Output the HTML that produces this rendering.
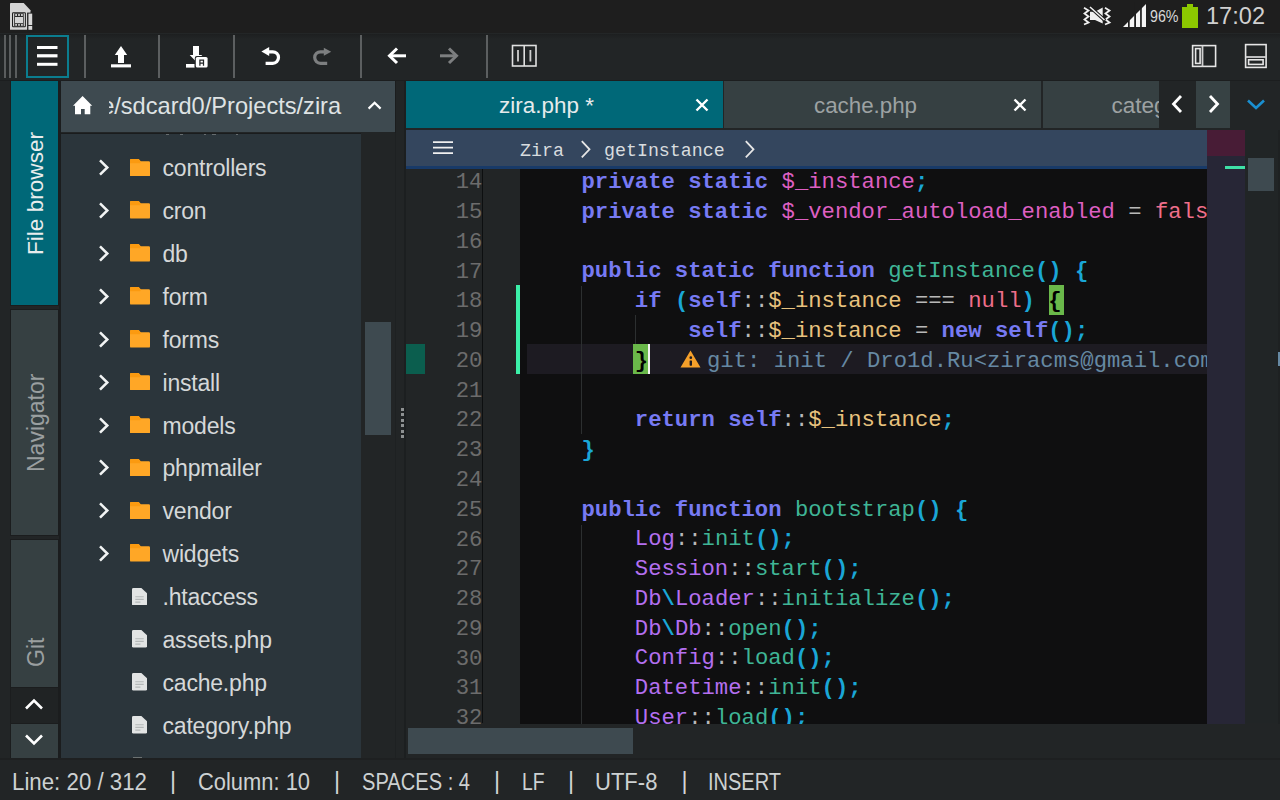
<!DOCTYPE html>
<html><head><meta charset="utf-8">
<style>
*{margin:0;padding:0;box-sizing:border-box}
html,body{width:1280px;height:800px;overflow:hidden;background:#222526;font-family:"Liberation Sans",sans-serif}
.a{position:absolute}
.tx{position:absolute;white-space:nowrap;line-height:1;font-family:"Liberation Sans",sans-serif}
#sbar{left:0;top:0;width:1280px;height:34px;background:#1e1e1e;border-bottom:1px solid #232627}
#tbar{left:0;top:34px;width:1280px;height:47px;background:linear-gradient(#1d1f20,#222526 5px);border-bottom:1px solid #1c1e1f}
.sep{position:absolute;top:35px;width:2px;height:43px;background:#5c5f60}
.grip{position:absolute;top:35px;width:2px;height:43px;background:#5a5d5e}
.ltab{position:absolute;left:11px;width:47px;overflow:hidden;box-shadow:0 0 0 1px #1b1d1e}
.vt{position:absolute;white-space:nowrap;font-size:23px;line-height:1;transform-origin:0 0;transform:rotate(-90deg)}
#phead{left:61px;top:81px;width:334px;height:51px;background:#3e4a50}
#flist{left:61px;top:133px;width:300px;height:625px;background:#2b353b;overflow:hidden}
.tab{position:absolute;top:0;height:47px;overflow:hidden}
#crumb{left:406px;top:130px;width:801px;height:36px;background:#34465e}
#crumbb{left:406px;top:166px;width:801px;height:3px;background:#183a68}
#gutter{left:406px;top:169px;width:114px;height:555px;background:#222526;overflow:hidden}
#code{left:520px;top:169px;width:687px;height:555px;background:#0f0f10;overflow:hidden}
.cl{position:absolute;left:8.2px;white-space:pre;font-family:"Liberation Mono",monospace;font-size:22.22px;line-height:1;color:#d0d0d0}
.k{color:#777af3;font-weight:bold}
.v{color:#de5fc2}
.f{color:#ee6e8a}
.fn{color:#3fb596}
.p{color:#1aa6d6;font-weight:bold}
.o{color:#b8b8b8}
.s{color:#e8c27e}
.c{color:#b46ff0}
.hb{color:#000;font-weight:bold}
#mini{left:1207px;top:130px;width:38px;height:594px;background:#272636}
#vscr{left:1245px;top:130px;width:33px;height:593px;background:#212526}
#hscr{left:406px;top:724px;width:874px;height:35px;background:#222526}
#foot{left:0;top:758px;width:1280px;height:42px;background:#222526}
</style></head><body>
<div id="sbar" class="a"></div>
<!-- sd card icon -->
<svg class="a" style="left:0;top:0" width="40" height="34" viewBox="0 0 40 34">
  <path d="M10 3.8 Q10 3 10.8 3 H23.7 L30.5 10.2 V29.8 H10 Z" fill="#d4d4d4"/>
  <rect x="27.1" y="12.6" width="6" height="19" fill="#1e1e1e"/>
  <rect x="28.4" y="13.6" width="3.8" height="11.5" fill="#d8d8d8"/>
  <rect x="28.4" y="26" width="3.8" height="3.8" fill="#d8d8d8"/>
  <rect x="12" y="12.3" width="13.9" height="14.9" rx="1.2" fill="#1e1e1e"/>
  <rect x="13" y="13.3" width="11.9" height="12.9" fill="#d0d0d0"/>
  <rect x="14.2" y="13.3" width="9.5" height="12.9" fill="#2a2a2a"/>
  <rect x="15" y="17" width="8" height="6.2" fill="#d4d4d4"/>
  <rect x="15.2" y="14" width="1.8" height="2" fill="#c8c8c8"/><rect x="18.1" y="14" width="1.8" height="2" fill="#c8c8c8"/><rect x="21" y="14" width="1.8" height="2" fill="#c8c8c8"/>
  <rect x="15.2" y="24" width="1.8" height="1.8" fill="#c8c8c8"/><rect x="18.1" y="24" width="1.8" height="1.8" fill="#c8c8c8"/><rect x="21" y="24" width="1.8" height="1.8" fill="#c8c8c8"/>
</svg>
<!-- right status icons -->
<svg class="a" style="left:1078px;top:2px" width="72" height="28" viewBox="0 0 72 28">
  <path d="M6 5.8 L10.5 8.5 L6.5 11.5 L10.5 14.5 L6.5 17.5 L10.5 20.5 L6 22.5" fill="none" stroke="#f0f0f0" stroke-width="1.8"/>
  <path d="M27 5.8 L31.5 8.5 L27.5 11.5 L31.5 14.5 L27.5 17.5 L31.5 20.5 L27 22.5" fill="none" stroke="#f0f0f0" stroke-width="1.8"/>
  <path d="M12 9.8 H17 L24.7 5.6 V21.6 L17 18 H12 Z" fill="#f0f0f0"/>
  <path d="M11.5 4.5 L27 18.5" stroke="#1e1e1e" stroke-width="3.6"/>
  <path d="M12 5 L26.5 18" stroke="#f0f0f0" stroke-width="1.5"/>
  <path d="M45 25 L68 2 V25 Z" fill="#f4f4f4"/>
  <rect x="50" y="0" width="1.7" height="26" fill="#1e1e1e"/>
  <rect x="56.2" y="0" width="1.8" height="26" fill="#1e1e1e"/>
  <rect x="62.1" y="0" width="1.7" height="26" fill="#1e1e1e"/>
</svg>
<div class="tx" style="left:1149.5px;top:7.91px;font-size:17.0px;color:#d8d8d8;transform:scaleX(0.8376);transform-origin:0 0;">96%</div>
<svg class="a" style="left:1182px;top:4px" width="16" height="25" viewBox="0 0 16 25">
  <rect x="5" y="0" width="6" height="3.5" fill="#8cc800"/>
  <rect x="0" y="3" width="16" height="21" fill="#8cc800"/>
</svg>
<div class="tx" style="left:1205.5px;top:3.68px;font-size:24.0px;color:#d0d0d0;transform:scaleX(0.9825);transform-origin:0 0;">17:02</div>

<div id="tbar" class="a"></div>
<div class="grip" style="left:4px"></div>
<div class="grip" style="left:9px"></div>
<div class="grip" style="left:15px"></div>
<div class="a" style="left:26px;top:35px;width:43px;height:43px;border:2px solid #0b7d8f"></div>
<svg class="a" style="left:37px;top:46px" width="21" height="21" viewBox="0 0 21 21">
  <rect x="0" y="0" width="20.5" height="3" fill="#fff"/>
  <rect x="0" y="8.2" width="20.5" height="3.2" fill="#fff"/>
  <rect x="0" y="16.8" width="20.5" height="3" fill="#fff"/>
</svg>
<div class="sep" style="left:84px"></div>
<!-- upload -->
<svg class="a" style="left:110px;top:45px" width="22" height="24" viewBox="0 0 22 24">
  <path d="M11 1 L17.2 10 H14 V18 H8 V10 H4.8 Z" fill="#fff"/>
  <rect x="1" y="19.3" width="20" height="3.1" fill="#fff"/>
</svg>
<div class="sep" style="left:158px"></div>
<!-- save as -->
<svg class="a" style="left:185px;top:45px" width="24" height="24" viewBox="0 0 24 24">
  <path d="M8 1 H14 V10 H17.3 L11 16.5 L4.7 10 H8 Z" fill="#fff"/>
  <rect x="1" y="19" width="8.6" height="3.6" fill="#fff"/>
  <rect x="9.8" y="11" width="13.8" height="12.6" rx="2" fill="#222526"/>
  <rect x="10.8" y="12" width="11.8" height="10.6" rx="1.6" fill="#fff"/>
  <path d="M14.9 20.8 V15.2 H18.5 V20.8 M14.9 18 H18.5" fill="none" stroke="#222526" stroke-width="1.25"/>
</svg>
<div class="sep" style="left:233px"></div>
<!-- undo -->
<svg class="a" style="left:260px;top:46px" width="22" height="20" viewBox="0 0 22 20">
  <path d="M7 5.8 H12.75 A5.75 5.75 0 0 1 12.75 17.3 H5.6" fill="none" stroke="#fff" stroke-width="3.2"/>
  <path d="M1.4 5.6 L9.2 1.1 V10.1 Z" fill="#fff"/>
</svg>
<!-- redo -->
<svg class="a" style="left:312px;top:46px" width="22" height="20" viewBox="0 0 22 20">
  <path d="M13 5.8 H8.45 A5.75 5.75 0 0 0 8.45 17.3 H15.2" fill="none" stroke="#7d7f80" stroke-width="3.2"/>
  <path d="M19.2 5.8 L11.8 1.8 V9.8 Z" fill="#7d7f80"/>
</svg>
<div class="sep" style="left:360px"></div>
<!-- back -->
<svg class="a" style="left:386px;top:46px" width="22" height="20" viewBox="0 0 22 20">
  <path d="M20 9.8 H4" stroke="#fff" stroke-width="3"/>
  <path d="M11 2.5 L3.5 9.8 L11 17" fill="none" stroke="#fff" stroke-width="3"/>
</svg>
<!-- forward -->
<svg class="a" style="left:438px;top:46px" width="22" height="20" viewBox="0 0 22 20">
  <path d="M2 9.8 H18" stroke="#7d7f80" stroke-width="3"/>
  <path d="M11 2.5 L18.5 9.8 L11 17" fill="none" stroke="#7d7f80" stroke-width="3"/>
</svg>
<div class="sep" style="left:486px"></div>
<!-- split -->
<svg class="a" style="left:511px;top:44px" width="27" height="24" viewBox="0 0 27 24">
  <rect x="1.5" y="1.5" width="23.5" height="20.5" fill="none" stroke="#e0e0e0" stroke-width="1.6"/>
  <path d="M13.2 1.5 V22" stroke="#e0e0e0" stroke-width="1.6"/>
  <path d="M7 6 V17.5 M19.4 6 V17.5" stroke="#cfcfcf" stroke-width="1.8"/>
</svg>
<!-- right toolbar icons -->
<svg class="a" style="left:1191px;top:44px" width="27" height="24" viewBox="0 0 27 24">
  <rect x="1.6" y="1.6" width="23" height="20.8" fill="none" stroke="#e6e6e6" stroke-width="1.6"/>
  <path d="M11.5 1.6 V22.4" stroke="#d0d0d0" stroke-width="1.8"/>
  <rect x="4.6" y="4.6" width="4.5" height="14.8" fill="none" stroke="#e6e6e6" stroke-width="1.6"/>
</svg>
<svg class="a" style="left:1244px;top:43px" width="24" height="26" viewBox="0 0 24 26">
  <rect x="1.6" y="1.6" width="20.5" height="22.8" fill="none" stroke="#e6e6e6" stroke-width="1.6"/>
  <path d="M1.6 14 H22" stroke="#d0d0d0" stroke-width="1.8"/>
  <rect x="4.6" y="16.8" width="14.5" height="4.6" fill="none" stroke="#e6e6e6" stroke-width="1.6"/>
</svg>

<!-- left tabs -->
<div class="ltab" style="top:81px;height:224px;background:#006878"></div>
<div class="vt" style="left:24.5px;top:254.5px;color:#e8eced;font-size:22.6px">File browser</div>
<div class="ltab" style="top:310px;height:225px;background:#364042"></div>
<div class="vt" style="left:24.5px;top:471.5px;color:#9a9fa0">Navigator</div>
<div class="ltab" style="top:540px;height:147px;background:#364042"></div>
<div class="vt" style="left:24.5px;top:666.5px;color:#9a9fa0">Git</div>
<div class="ltab" style="top:688px;height:35px;background:#202324"></div>
<svg class="a" style="left:24px;top:697px" width="20" height="14" viewBox="0 0 20 14"><path d="M2 11.5 L10 3.5 L18 11.5" fill="none" stroke="#fff" stroke-width="2.6"/></svg>
<div class="ltab" style="top:724px;height:34px;background:#364042"></div>
<svg class="a" style="left:24px;top:733px" width="20" height="14" viewBox="0 0 20 14"><path d="M2 2.5 L10 10.5 L18 2.5" fill="none" stroke="#fff" stroke-width="2.6"/></svg>

<!-- file panel -->
<div class="a" style="left:58.5px;top:81px;width:2.5px;height:678px;background:#1b1d1e"></div>
<div id="phead" class="a" style="overflow:hidden">
  <svg class="a" style="left:12px;top:15px" width="20" height="19" viewBox="0 0 20 19"><path d="M9.6 0 L19.2 9.7 H17.3 V18.2 H11.7 V13 H8 V18.2 H2 V9.7 H0 Z" fill="#fff"/></svg>
  <div class="a" style="left:48px;top:0;width:250px;height:51px;overflow:hidden">
    <div class="tx" style="left:-80.0px;top:14.02px;font-size:23.6px;color:#dfe3e4;">/storage/sdcard0/Projects/zira</div>
  </div>
  <svg class="a" style="left:306px;top:19px" width="16" height="11" viewBox="0 0 16 11"><path d="M1.6 8.6 L7.6 2.8 L13.6 8.6" fill="none" stroke="#fff" stroke-width="2.2"/></svg>
</div>
<div id="flist" class="a">
<div class="a" style="left:0;top:0;width:300px;height:1px;background:#1a1c1d"></div>
<div class="a" style="left:105px;top:1px;width:3px;height:1px;background:#666d70"></div>
<div class="a" style="left:119px;top:1px;width:3px;height:1px;background:#666d70"></div>
<div class="a" style="left:143px;top:1px;width:2px;height:1px;background:#666d70"></div>
<div class="a" style="left:151px;top:1px;width:4px;height:1px;background:#666d70"></div>
<div class="a" style="left:175px;top:1px;width:2px;height:1px;background:#666d70"></div>
<div class="a" style="left:72px;top:624px;width:9px;height:1px;background:#6c7272"></div>
<svg class="a" style="left:37px;top:26.3px" width="12" height="17" viewBox="0 0 12 17"><path d="M2 1.3 L9.3 8.5 L2 15.7" fill="none" stroke="#f2f4f4" stroke-width="2.5"/></svg>
<svg class="a" style="left:69px;top:25.5px" width="20" height="17.6" viewBox="0 0 20 17.6"><path d="M0 1.2 Q0 0 1.2 0 H8.6 L10.6 2.2 H18.8 Q20 2.2 20 3.4 V16.4 Q20 17.6 18.8 17.6 H1.2 Q0 17.6 0 16.4 Z" fill="#ffa726"/><path d="M0 1.2 Q0 0 1.2 0 H8.6 L10.6 2.2 V3.6 Q10.6 4.2 10 4.2 H0 Z" fill="#fb9a10"/></svg>
<div class="tx" style="left:101.5px;top:24.33px;font-size:23px;color:#d5d8d9;letter-spacing:-0.2px;">controllers</div>
<svg class="a" style="left:37px;top:69.2px" width="12" height="17" viewBox="0 0 12 17"><path d="M2 1.3 L9.3 8.5 L2 15.7" fill="none" stroke="#f2f4f4" stroke-width="2.5"/></svg>
<svg class="a" style="left:69px;top:68.4px" width="20" height="17.6" viewBox="0 0 20 17.6"><path d="M0 1.2 Q0 0 1.2 0 H8.6 L10.6 2.2 H18.8 Q20 2.2 20 3.4 V16.4 Q20 17.6 18.8 17.6 H1.2 Q0 17.6 0 16.4 Z" fill="#ffa726"/><path d="M0 1.2 Q0 0 1.2 0 H8.6 L10.6 2.2 V3.6 Q10.6 4.2 10 4.2 H0 Z" fill="#fb9a10"/></svg>
<div class="tx" style="left:101.5px;top:67.20px;font-size:23px;color:#d5d8d9;letter-spacing:-0.2px;">cron</div>
<svg class="a" style="left:37px;top:112.0px" width="12" height="17" viewBox="0 0 12 17"><path d="M2 1.3 L9.3 8.5 L2 15.7" fill="none" stroke="#f2f4f4" stroke-width="2.5"/></svg>
<svg class="a" style="left:69px;top:111.2px" width="20" height="17.6" viewBox="0 0 20 17.6"><path d="M0 1.2 Q0 0 1.2 0 H8.6 L10.6 2.2 H18.8 Q20 2.2 20 3.4 V16.4 Q20 17.6 18.8 17.6 H1.2 Q0 17.6 0 16.4 Z" fill="#ffa726"/><path d="M0 1.2 Q0 0 1.2 0 H8.6 L10.6 2.2 V3.6 Q10.6 4.2 10 4.2 H0 Z" fill="#fb9a10"/></svg>
<div class="tx" style="left:101.5px;top:110.07px;font-size:23px;color:#d5d8d9;letter-spacing:-0.2px;">db</div>
<svg class="a" style="left:37px;top:154.9px" width="12" height="17" viewBox="0 0 12 17"><path d="M2 1.3 L9.3 8.5 L2 15.7" fill="none" stroke="#f2f4f4" stroke-width="2.5"/></svg>
<svg class="a" style="left:69px;top:154.1px" width="20" height="17.6" viewBox="0 0 20 17.6"><path d="M0 1.2 Q0 0 1.2 0 H8.6 L10.6 2.2 H18.8 Q20 2.2 20 3.4 V16.4 Q20 17.6 18.8 17.6 H1.2 Q0 17.6 0 16.4 Z" fill="#ffa726"/><path d="M0 1.2 Q0 0 1.2 0 H8.6 L10.6 2.2 V3.6 Q10.6 4.2 10 4.2 H0 Z" fill="#fb9a10"/></svg>
<div class="tx" style="left:101.5px;top:152.94px;font-size:23px;color:#d5d8d9;letter-spacing:-0.2px;">form</div>
<svg class="a" style="left:37px;top:197.8px" width="12" height="17" viewBox="0 0 12 17"><path d="M2 1.3 L9.3 8.5 L2 15.7" fill="none" stroke="#f2f4f4" stroke-width="2.5"/></svg>
<svg class="a" style="left:69px;top:197.0px" width="20" height="17.6" viewBox="0 0 20 17.6"><path d="M0 1.2 Q0 0 1.2 0 H8.6 L10.6 2.2 H18.8 Q20 2.2 20 3.4 V16.4 Q20 17.6 18.8 17.6 H1.2 Q0 17.6 0 16.4 Z" fill="#ffa726"/><path d="M0 1.2 Q0 0 1.2 0 H8.6 L10.6 2.2 V3.6 Q10.6 4.2 10 4.2 H0 Z" fill="#fb9a10"/></svg>
<div class="tx" style="left:101.5px;top:195.81px;font-size:23px;color:#d5d8d9;letter-spacing:-0.2px;">forms</div>
<svg class="a" style="left:37px;top:240.6px" width="12" height="17" viewBox="0 0 12 17"><path d="M2 1.3 L9.3 8.5 L2 15.7" fill="none" stroke="#f2f4f4" stroke-width="2.5"/></svg>
<svg class="a" style="left:69px;top:239.8px" width="20" height="17.6" viewBox="0 0 20 17.6"><path d="M0 1.2 Q0 0 1.2 0 H8.6 L10.6 2.2 H18.8 Q20 2.2 20 3.4 V16.4 Q20 17.6 18.8 17.6 H1.2 Q0 17.6 0 16.4 Z" fill="#ffa726"/><path d="M0 1.2 Q0 0 1.2 0 H8.6 L10.6 2.2 V3.6 Q10.6 4.2 10 4.2 H0 Z" fill="#fb9a10"/></svg>
<div class="tx" style="left:101.5px;top:238.68px;font-size:23px;color:#d5d8d9;letter-spacing:-0.2px;">install</div>
<svg class="a" style="left:37px;top:283.5px" width="12" height="17" viewBox="0 0 12 17"><path d="M2 1.3 L9.3 8.5 L2 15.7" fill="none" stroke="#f2f4f4" stroke-width="2.5"/></svg>
<svg class="a" style="left:69px;top:282.7px" width="20" height="17.6" viewBox="0 0 20 17.6"><path d="M0 1.2 Q0 0 1.2 0 H8.6 L10.6 2.2 H18.8 Q20 2.2 20 3.4 V16.4 Q20 17.6 18.8 17.6 H1.2 Q0 17.6 0 16.4 Z" fill="#ffa726"/><path d="M0 1.2 Q0 0 1.2 0 H8.6 L10.6 2.2 V3.6 Q10.6 4.2 10 4.2 H0 Z" fill="#fb9a10"/></svg>
<div class="tx" style="left:101.5px;top:281.55px;font-size:23px;color:#d5d8d9;letter-spacing:-0.2px;">models</div>
<svg class="a" style="left:37px;top:326.4px" width="12" height="17" viewBox="0 0 12 17"><path d="M2 1.3 L9.3 8.5 L2 15.7" fill="none" stroke="#f2f4f4" stroke-width="2.5"/></svg>
<svg class="a" style="left:69px;top:325.6px" width="20" height="17.6" viewBox="0 0 20 17.6"><path d="M0 1.2 Q0 0 1.2 0 H8.6 L10.6 2.2 H18.8 Q20 2.2 20 3.4 V16.4 Q20 17.6 18.8 17.6 H1.2 Q0 17.6 0 16.4 Z" fill="#ffa726"/><path d="M0 1.2 Q0 0 1.2 0 H8.6 L10.6 2.2 V3.6 Q10.6 4.2 10 4.2 H0 Z" fill="#fb9a10"/></svg>
<div class="tx" style="left:101.5px;top:324.42px;font-size:23px;color:#d5d8d9;letter-spacing:-0.2px;">phpmailer</div>
<svg class="a" style="left:37px;top:369.3px" width="12" height="17" viewBox="0 0 12 17"><path d="M2 1.3 L9.3 8.5 L2 15.7" fill="none" stroke="#f2f4f4" stroke-width="2.5"/></svg>
<svg class="a" style="left:69px;top:368.5px" width="20" height="17.6" viewBox="0 0 20 17.6"><path d="M0 1.2 Q0 0 1.2 0 H8.6 L10.6 2.2 H18.8 Q20 2.2 20 3.4 V16.4 Q20 17.6 18.8 17.6 H1.2 Q0 17.6 0 16.4 Z" fill="#ffa726"/><path d="M0 1.2 Q0 0 1.2 0 H8.6 L10.6 2.2 V3.6 Q10.6 4.2 10 4.2 H0 Z" fill="#fb9a10"/></svg>
<div class="tx" style="left:101.5px;top:367.29px;font-size:23px;color:#d5d8d9;letter-spacing:-0.2px;">vendor</div>
<svg class="a" style="left:37px;top:412.1px" width="12" height="17" viewBox="0 0 12 17"><path d="M2 1.3 L9.3 8.5 L2 15.7" fill="none" stroke="#f2f4f4" stroke-width="2.5"/></svg>
<svg class="a" style="left:69px;top:411.3px" width="20" height="17.6" viewBox="0 0 20 17.6"><path d="M0 1.2 Q0 0 1.2 0 H8.6 L10.6 2.2 H18.8 Q20 2.2 20 3.4 V16.4 Q20 17.6 18.8 17.6 H1.2 Q0 17.6 0 16.4 Z" fill="#ffa726"/><path d="M0 1.2 Q0 0 1.2 0 H8.6 L10.6 2.2 V3.6 Q10.6 4.2 10 4.2 H0 Z" fill="#fb9a10"/></svg>
<div class="tx" style="left:101.5px;top:410.16px;font-size:23px;color:#d5d8d9;letter-spacing:-0.2px;">widgets</div>
<svg class="a" style="left:71px;top:454.5px" width="15" height="17.6" viewBox="0 0 16 20" preserveAspectRatio="none"><path d="M0 1.5 Q0 0 1.5 0 H10 L16 6 V18.5 Q16 20 14.5 20 H1.5 Q0 20 0 18.5 Z" fill="#e2e4e4"/><path d="M3.5 10 H12.5 M3.5 13 H12.5 M3.5 16 H9" stroke="#b4b8b8" stroke-width="1.3"/></svg>
<div class="tx" style="left:101.5px;top:453.03px;font-size:23px;color:#d5d8d9;letter-spacing:-0.2px;">.htaccess</div>
<svg class="a" style="left:71px;top:497.4px" width="15" height="17.6" viewBox="0 0 16 20" preserveAspectRatio="none"><path d="M0 1.5 Q0 0 1.5 0 H10 L16 6 V18.5 Q16 20 14.5 20 H1.5 Q0 20 0 18.5 Z" fill="#e2e4e4"/><path d="M3.5 10 H12.5 M3.5 13 H12.5 M3.5 16 H9" stroke="#b4b8b8" stroke-width="1.3"/></svg>
<div class="tx" style="left:101.5px;top:495.90px;font-size:23px;color:#d5d8d9;letter-spacing:-0.2px;">assets.php</div>
<svg class="a" style="left:71px;top:540.2px" width="15" height="17.6" viewBox="0 0 16 20" preserveAspectRatio="none"><path d="M0 1.5 Q0 0 1.5 0 H10 L16 6 V18.5 Q16 20 14.5 20 H1.5 Q0 20 0 18.5 Z" fill="#e2e4e4"/><path d="M3.5 10 H12.5 M3.5 13 H12.5 M3.5 16 H9" stroke="#b4b8b8" stroke-width="1.3"/></svg>
<div class="tx" style="left:101.5px;top:538.77px;font-size:23px;color:#d5d8d9;letter-spacing:-0.2px;">cache.php</div>
<svg class="a" style="left:71px;top:583.1px" width="15" height="17.6" viewBox="0 0 16 20" preserveAspectRatio="none"><path d="M0 1.5 Q0 0 1.5 0 H10 L16 6 V18.5 Q16 20 14.5 20 H1.5 Q0 20 0 18.5 Z" fill="#e2e4e4"/><path d="M3.5 10 H12.5 M3.5 13 H12.5 M3.5 16 H9" stroke="#b4b8b8" stroke-width="1.3"/></svg>
<div class="tx" style="left:101.5px;top:581.64px;font-size:23px;color:#d5d8d9;letter-spacing:-0.2px;">category.php</div>
</div>
<div class="a" style="left:365px;top:322px;width:26px;height:113px;background:#3e4a50"></div>
<!-- divider -->
<div class="a" style="left:395px;top:81px;width:1px;height:52px;background:#1b1d1e"></div>
<div class="a" style="left:395px;top:133px;width:1px;height:625px;background:#1e2122"></div>
<div class="a" style="left:404px;top:81px;width:1.5px;height:677px;background:#1c1f20"></div>

<div class="a" style="left:401px;top:407.5px;width:3px;height:3px;background:#8e9192"></div><div class="a" style="left:401px;top:413.0px;width:3px;height:3px;background:#8e9192"></div><div class="a" style="left:401px;top:418.5px;width:3px;height:3px;background:#8e9192"></div><div class="a" style="left:401px;top:424.0px;width:3px;height:3px;background:#8e9192"></div><div class="a" style="left:401px;top:429.5px;width:3px;height:3px;background:#8e9192"></div><div class="a" style="left:401px;top:435.0px;width:3px;height:3px;background:#8e9192"></div>
<!-- editor tabs -->
<div class="a" style="left:406px;top:81px;width:874px;height:47px">
  <div class="tab" style="left:0;width:317px;background:#006878">
    <div class="tx" style="left:92.7px;top:13.95px;font-size:22.5px;color:#e6ebec;transform:scaleX(0.9995);transform-origin:0 0;">zira.php *</div>
    <svg class="a" style="left:289px;top:16.5px" width="14" height="14" viewBox="0 0 14 14"><path d="M1.5 1.5 L12.5 12.5 M12.5 1.5 L1.5 12.5" stroke="#fff" stroke-width="2.4"/></svg>
  </div>
  <div class="tab" style="left:318px;width:317px;background:#364042">
    <div class="tx" style="left:89.5px;top:13.95px;font-size:22.5px;color:#9da2a3;transform:scaleX(0.9921);transform-origin:0 0;">cache.php</div>
    <svg class="a" style="left:289px;top:16.5px" width="14" height="14" viewBox="0 0 14 14"><path d="M1.5 1.5 L12.5 12.5 M12.5 1.5 L1.5 12.5" stroke="#fff" stroke-width="2.4"/></svg>
  </div>
  <div class="tab" style="left:637px;width:116px;background:#364042">
    <div class="tx" style="left:68.5px;top:13.95px;font-size:22.5px;color:#9da2a3;">category.php</div>
  </div>
  <div class="tab" style="left:753px;width:37px;background:#222526">
    <svg class="a" style="left:11px;top:13px" width="14" height="20" viewBox="0 0 14 20"><path d="M11 2 L3.5 10 L11 18" fill="none" stroke="#fff" stroke-width="2.8"/></svg>
  </div>
  <div class="tab" style="left:790px;width:34px;background:#374244">
    <svg class="a" style="left:10.5px;top:13px" width="14" height="20" viewBox="0 0 14 20"><path d="M3 2 L10.5 10 L3 18" fill="none" stroke="#fff" stroke-width="2.8"/></svg>
  </div>
  <svg class="a" style="left:840px;top:17px" width="20" height="13" viewBox="0 0 20 13"><path d="M2 2.5 L10 10 L18 2.5" fill="none" stroke="#1a8fd0" stroke-width="2.6"/></svg>
</div>

<!-- breadcrumb -->
<div id="crumb" class="a">
  <svg class="a" style="left:27px;top:11px" width="21" height="15" viewBox="0 0 21 15"><path d="M0 1.2 H20 M0 6.7 H20 M0 12.2 H20" stroke="#f0f0f0" stroke-width="1.7"/></svg>
  <div class="cl" style="left:114px;top:12px;font-size:18.3px;color:#d8dcdf">Zira</div>
  <svg class="a" style="left:173.5px;top:10px" width="12" height="19" viewBox="0 0 12 19"><path d="M1.8 1.2 L9.5 9.3 L1.8 17.4" fill="none" stroke="#e6e6e6" stroke-width="1.8"/></svg>
  <div class="cl" style="left:198px;top:12px;font-size:18.3px;color:#d8dcdf">getInstance</div>
  <svg class="a" style="left:337.5px;top:10px" width="12" height="19" viewBox="0 0 12 19"><path d="M1.8 1.2 L9.5 9.3 L1.8 17.4" fill="none" stroke="#e6e6e6" stroke-width="1.8"/></svg>
</div>
<div id="crumbb" class="a"></div>

<div id="gutter" class="a">
<div class="a" style="left:0;top:3.18px;width:76.3px;text-align:right;font-family:Liberation Mono,monospace;font-size:22.2px;line-height:1;color:#6c6c6c;white-space:pre">14</div>
<div class="a" style="left:0;top:32.96px;width:76.3px;text-align:right;font-family:Liberation Mono,monospace;font-size:22.2px;line-height:1;color:#6c6c6c;white-space:pre">15</div>
<div class="a" style="left:0;top:62.74px;width:76.3px;text-align:right;font-family:Liberation Mono,monospace;font-size:22.2px;line-height:1;color:#6c6c6c;white-space:pre">16</div>
<div class="a" style="left:0;top:92.52px;width:76.3px;text-align:right;font-family:Liberation Mono,monospace;font-size:22.2px;line-height:1;color:#6c6c6c;white-space:pre">17</div>
<div class="a" style="left:0;top:122.30px;width:76.3px;text-align:right;font-family:Liberation Mono,monospace;font-size:22.2px;line-height:1;color:#6c6c6c;white-space:pre">18</div>
<div class="a" style="left:0;top:152.08px;width:76.3px;text-align:right;font-family:Liberation Mono,monospace;font-size:22.2px;line-height:1;color:#6c6c6c;white-space:pre">19</div>
<div class="a" style="left:0;top:181.86px;width:76.3px;text-align:right;font-family:Liberation Mono,monospace;font-size:22.2px;line-height:1;color:#6c6c6c;white-space:pre">20</div>
<div class="a" style="left:0;top:211.64px;width:76.3px;text-align:right;font-family:Liberation Mono,monospace;font-size:22.2px;line-height:1;color:#6c6c6c;white-space:pre">21</div>
<div class="a" style="left:0;top:241.42px;width:76.3px;text-align:right;font-family:Liberation Mono,monospace;font-size:22.2px;line-height:1;color:#6c6c6c;white-space:pre">22</div>
<div class="a" style="left:0;top:271.20px;width:76.3px;text-align:right;font-family:Liberation Mono,monospace;font-size:22.2px;line-height:1;color:#6c6c6c;white-space:pre">23</div>
<div class="a" style="left:0;top:300.98px;width:76.3px;text-align:right;font-family:Liberation Mono,monospace;font-size:22.2px;line-height:1;color:#6c6c6c;white-space:pre">24</div>
<div class="a" style="left:0;top:330.76px;width:76.3px;text-align:right;font-family:Liberation Mono,monospace;font-size:22.2px;line-height:1;color:#6c6c6c;white-space:pre">25</div>
<div class="a" style="left:0;top:360.54px;width:76.3px;text-align:right;font-family:Liberation Mono,monospace;font-size:22.2px;line-height:1;color:#6c6c6c;white-space:pre">26</div>
<div class="a" style="left:0;top:390.32px;width:76.3px;text-align:right;font-family:Liberation Mono,monospace;font-size:22.2px;line-height:1;color:#6c6c6c;white-space:pre">27</div>
<div class="a" style="left:0;top:420.10px;width:76.3px;text-align:right;font-family:Liberation Mono,monospace;font-size:22.2px;line-height:1;color:#6c6c6c;white-space:pre">28</div>
<div class="a" style="left:0;top:449.88px;width:76.3px;text-align:right;font-family:Liberation Mono,monospace;font-size:22.2px;line-height:1;color:#6c6c6c;white-space:pre">29</div>
<div class="a" style="left:0;top:479.66px;width:76.3px;text-align:right;font-family:Liberation Mono,monospace;font-size:22.2px;line-height:1;color:#6c6c6c;white-space:pre">30</div>
<div class="a" style="left:0;top:509.44px;width:76.3px;text-align:right;font-family:Liberation Mono,monospace;font-size:22.2px;line-height:1;color:#6c6c6c;white-space:pre">31</div>
<div class="a" style="left:0;top:539.22px;width:76.3px;text-align:right;font-family:Liberation Mono,monospace;font-size:22.2px;line-height:1;color:#6c6c6c;white-space:pre">32</div>
<div class="a" style="left:76px;top:0;width:1px;height:554px;background:#0d0f10"></div>
<div class="a" style="left:110px;top:116px;width:4px;height:89px;background:#3cf0a8"></div>
<div class="a" style="left:0;top:175px;width:19px;height:30px;background:#0b5e4e"></div>
</div>
<div id="code" class="a">
<div class="a" style="left:7px;top:174.5px;width:680px;height:30.5px;background:#1d1b22"></div>
<div class="a" style="left:61px;top:117px;width:1px;height:148px;background:#2c2f30"></div>
<div class="a" style="left:61px;top:356px;width:1px;height:200px;background:#2c2f30"></div>
<div class="a" style="left:114.5px;top:146px;width:1px;height:29px;background:#2c2f30"></div>
<div class="a" style="left:528.8px;top:116px;width:15.3px;height:30px;background:#6ab84a"></div>
<div class="a" style="left:112.8px;top:175px;width:15.2px;height:30px;background:#6ab84a"></div>
<div class="cl" style="top:2.97px">    <span class="k">private static</span> <span class="v">$_instance</span><span class="p">;</span></div>
<div class="cl" style="top:32.75px">    <span class="k">private static</span> <span class="v">$_vendor_autoload_enabled</span><span class="o"> = </span><span class="f">false</span><span class="p">;</span></div>
<div class="cl" style="top:62.53px"></div>
<div class="cl" style="top:92.31px">    <span class="k">public static function</span> <span class="fn">getInstance</span><span class="p">()</span> <span class="p">{</span></div>
<div class="cl" style="top:122.09px">        <span class="k">if</span> <span class="p">(</span><span class="k">self</span><span class="o">::</span><span class="s">$_instance</span><span class="o"> === </span><span class="f">null</span><span class="p">)</span> <span class="hb">{</span></div>
<div class="cl" style="top:151.87px">            <span class="k">self</span><span class="o">::</span><span class="s">$_instance</span><span class="o"> = </span><span class="k">new</span> <span class="k">self</span><span class="p">();</span></div>
<div class="cl" style="top:181.65px">        <span class="hb">}</span></div>
<div class="cl" style="top:211.43px"></div>
<div class="cl" style="top:241.21px">        <span class="k">return</span> <span class="k">self</span><span class="o">::</span><span class="s">$_instance</span><span class="p">;</span></div>
<div class="cl" style="top:270.99px">    <span class="p">}</span></div>
<div class="cl" style="top:300.77px"></div>
<div class="cl" style="top:330.55px">    <span class="k">public function</span> <span class="fn">bootstrap</span><span class="p">()</span> <span class="p">{</span></div>
<div class="cl" style="top:360.33px">        <span class="c">Log</span><span class="o">::</span><span class="fn">init</span><span class="p">();</span></div>
<div class="cl" style="top:390.11px">        <span class="c">Session</span><span class="o">::</span><span class="fn">start</span><span class="p">();</span></div>
<div class="cl" style="top:419.89px">        <span class="c">Db</span><span class="p">\</span><span class="c">Loader</span><span class="o">::</span><span class="fn">initialize</span><span class="p">();</span></div>
<div class="cl" style="top:449.67px">        <span class="c">Db</span><span class="p">\</span><span class="c">Db</span><span class="o">::</span><span class="fn">open</span><span class="p">();</span></div>
<div class="cl" style="top:479.45px">        <span class="c">Config</span><span class="o">::</span><span class="fn">load</span><span class="p">();</span></div>
<div class="cl" style="top:509.23px">        <span class="c">Datetime</span><span class="o">::</span><span class="fn">init</span><span class="p">();</span></div>
<div class="cl" style="top:539.01px">        <span class="c">User</span><span class="o">::</span><span class="fn">load</span><span class="p">();</span></div>
<div class="a" style="left:128px;top:175px;width:2px;height:30px;background:#f4f4f4"></div>
<svg class="a" style="left:160px;top:181px" width="21" height="18" viewBox="0 0 21 18"><path d="M10.5 0.5 L20.5 17.5 H0.5 Z" fill="#f5a02a"/><rect x="9.6" y="10.4" width="2.4" height="5.3" rx="0.6" fill="#1d1b22"/><circle cx="10.8" cy="7.7" r="1.35" fill="#1d1b22"/></svg>
<div class="cl" style="left:187px;top:181.8px;color:#6689a3">git: init / Dro1d.Ru&lt;ziracms@gmail.com&gt;</div>
</div>
<div id="mini" class="a">
  <div class="a" style="left:0;top:0;width:38px;height:26px;background:#481c36"></div>
  <div class="a" style="left:18px;top:36px;width:20px;height:3px;background:#3ee0a6"></div>
</div>
<div id="vscr" class="a">
  <div class="a" style="left:3px;top:28px;width:26px;height:33px;background:#3e4a50"></div>
</div>
<div class="a" style="left:1278px;top:130px;width:2px;height:628px;background:#1e2122"></div>
<div class="a" style="left:1278px;top:352px;width:2px;height:14px;background:#6689a3"></div>
<div id="hscr" class="a"></div>
<div class="a" style="left:408px;top:728px;width:225px;height:26px;background:#3e4a50"></div>
<div id="foot" class="a"></div>
<div class="a" style="left:0;top:758px;width:1280px;height:2px;background:#1e2021"></div>
<div class="tx" style="left:12.0px;top:770.58px;font-size:23.3px;color:#cdd1d2;transform:scaleX(0.9561);transform-origin:0 0;">Line: 20 / 312</div>
<div class="tx" style="left:170.0px;top:769.78px;font-size:23.3px;color:#d2d5d6;">|</div>
<div class="tx" style="left:198.0px;top:770.58px;font-size:23.3px;color:#cdd1d2;transform:scaleX(0.9400);transform-origin:0 0;">Column: 10</div>
<div class="tx" style="left:334.0px;top:769.78px;font-size:23.3px;color:#d2d5d6;">|</div>
<div class="tx" style="left:362.0px;top:770.58px;font-size:23.3px;color:#cdd1d2;transform:scaleX(0.8627);transform-origin:0 0;">SPACES : 4</div>
<div class="tx" style="left:494.0px;top:769.78px;font-size:23.3px;color:#d2d5d6;">|</div>
<div class="tx" style="left:521.5px;top:770.58px;font-size:23.3px;color:#cdd1d2;transform:scaleX(0.8276);transform-origin:0 0;">LF</div>
<div class="tx" style="left:568.0px;top:769.78px;font-size:23.3px;color:#d2d5d6;">|</div>
<div class="tx" style="left:595.0px;top:770.58px;font-size:23.3px;color:#cdd1d2;transform:scaleX(0.9454);transform-origin:0 0;">UTF-8</div>
<div class="tx" style="left:681.5px;top:769.78px;font-size:23.3px;color:#d2d5d6;">|</div>
<div class="tx" style="left:708.0px;top:770.58px;font-size:23.3px;color:#cdd1d2;transform:scaleX(0.8586);transform-origin:0 0;">INSERT</div>
</body></html>
